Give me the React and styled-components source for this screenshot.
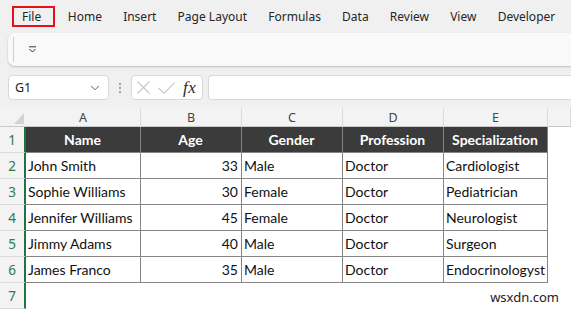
import React from "react";
import styled, { createGlobalStyle } from "styled-components";
import { ChevronDown, EllipsisVertical } from "lucide-react";

const Global = createGlobalStyle`
  html, body { margin: 0; padding: 0; }
  body {
    background: #f0f0f0;
    width: 571px;
    height: 309px;
    overflow: hidden;
    font-family: "Noto Sans", "Liberation Sans", sans-serif;
  }
`;

const Page = styled.div`
  display: flex;
  flex-direction: column;
  width: 571px;
  height: 309px;
  overflow: hidden;
`;

const TabBar = styled.div`
  display: flex;
  align-items: center;
  height: 33px;
  padding-left: 12px;
  box-sizing: border-box;
`;

const Tab = styled.div`
  font-size: 12px;
  color: #262626;
  white-space: nowrap;
  line-height: 17px;
  padding: ${(p) => (p.$active ? "0 12px 0 8px" : "0 10.6px")};
  border: ${(p) => (p.$active ? "2px solid #e8101a" : "none")};
  height: ${(p) => (p.$active ? "17px" : "auto")};
  margin-right: ${(p) => (p.$active ? "2px" : "0")};
  display: flex;
  align-items: center;
`;

const Ribbon = styled.div`
  margin-left: 8px;
  width: 580px;
  height: 34px;
  background: #f9f9f9;
  border-radius: 7px 0 0 7px;
  box-shadow: 0 1px 2px rgba(0, 0, 0, 0.22);
  display: flex;
  align-items: center;
  padding-left: 5px;
  gap: 14px;
  box-sizing: border-box;
`;

const Divider = styled.div`
  width: 1px;
  height: 25px;
  background: #cfcfcf;
`;

const FormulaRow = styled.div`
  display: flex;
  align-items: center;
  height: 25px;
  margin-top: 9px;
  padding-left: 8px;
`;

const Box = styled.div`
  height: 25px;
  box-sizing: border-box;
  background: #ffffff;
  border: 1px solid #d9d9d9;
  border-radius: 4px;
  display: flex;
  align-items: center;
`;

const NameBox = styled(Box)`
  width: 101px;
  padding: 0 6px 0 6px;
  justify-content: space-between;
  font-size: 12.5px;
  color: #222;
`;

const Dots = styled.div`
  width: 22px;
  display: flex;
  justify-content: center;
  color: #a0a0a0;
`;

const FxBox = styled(Box)`
  width: 72px;
  padding: 0 3px 0 5px;
  gap: 8px;
`;

const Fx = styled.span`
  font-family: "Liberation Serif", serif;
  font-style: italic;
  font-size: 17px;
  color: #2a2a2a;
  margin-left: 0px;
  letter-spacing: 0.5px;
`;

const Input = styled(Box)`
  margin-left: 5px;
  flex: 1;
  border-radius: 4px 0 0 4px;
  border-right: none;
`;

const Grid = styled.div`
  margin-top: 8px;
  display: grid;
  grid-template-columns: 26px 115px 101px 101px 101px 104px 1fr;
  grid-template-rows: 19px repeat(7, 26px);
  background: #ffffff;
  flex: 1;
`;

const Corner = styled.div`
  background: #f3f3f3;
  border-bottom: 1px solid #c9c9c9;
  position: relative;
  overflow: hidden;
`;

const ColHead = styled.div`
  background: #f3f3f3;
  border-bottom: 1px solid #c9c9c9;
  border-right: 1px solid #dadada;
  display: flex;
  align-items: center;
  justify-content: center;
  font-size: 12.5px;
  color: #444;
  padding-top: 1px;
  box-sizing: border-box;
`;

const RowHead = styled.div`
  background: #f3f3f3;
  border-right: 2px solid #217346;
  border-bottom: 1px solid #dcdcdc;
  box-sizing: border-box;
  display: flex;
  align-items: flex-end;
  justify-content: center;
  padding-bottom: 3px;
  font-size: 13.5px;
  color: #2f7a4e;
`;

const Cell = styled.div`
  box-sizing: border-box;
  font-family: Lato, "Liberation Sans", sans-serif;
  font-size: 14px;
  white-space: nowrap;
  overflow: visible;
  display: flex;
  align-items: flex-end;
  padding: 0 3px 4px 2px;
  color: ${(p) => (p.$head ? "#ffffff" : "#111")};
  font-weight: ${(p) => (p.$head ? 700 : 400)};
  background: ${(p) => (p.$head ? "#3b3b3b" : "#ffffff")};
  justify-content: ${(p) =>
    p.$head ? "center" : p.$num ? "flex-end" : "flex-start"};
  border-right: ${(p) => (p.$blank ? "none" : "1px solid #858585")};
  border-bottom: ${(p) => (p.$blank ? "none" : "1px solid #858585")};
`;

const Watermark = styled.div`
  position: absolute;
  right: 12px;
  bottom: 3px;
  font-family: "Noto Sans", sans-serif;
  font-size: 13px;
  color: #222;
`;

const Wrap = styled.div`
  position: relative;
  width: 571px;
  height: 309px;
`;

const tabs = ["File", "Home", "Insert", "Page Layout", "Formulas", "Data", "Review", "View", "Developer"];
const cols = ["A", "B", "C", "D", "E", ""];
const head = ["Name", "Age", "Gender", "Profession", "Specialization"];
const rows = [
  ["John Smith", "33", "Male", "Doctor", "Cardiologist"],
  ["Sophie Williams", "30", "Female", "Doctor", "Pediatrician"],
  ["Jennifer Williams", "45", "Female", "Doctor", "Neurologist"],
  ["Jimmy Adams", "40", "Male", "Doctor", "Surgeon"],
  ["James Franco", "35", "Male", "Doctor", "Endocrinologyst"],
];

export default function App() {
  return (
    <Wrap>
      <Global />
      <Page>
        <TabBar>
          {tabs.map((t, i) => (
            <Tab key={t} $active={i === 0}>{t}</Tab>
          ))}
        </TabBar>
        <Ribbon>
          <Divider />
          <svg width="9" height="7" viewBox="0 0 9 7">
            <path d="M1 0.8 H8" stroke="#333" strokeWidth="1" />
            <path d="M1.5 3 L4.5 6 L7.5 3" stroke="#333" strokeWidth="1" fill="none" />
          </svg>
        </Ribbon>
        <FormulaRow>
          <NameBox>
            <span>G1</span>
            <ChevronDown size={14} strokeWidth={1.6} color="#555" />
          </NameBox>
          <Dots>
            <EllipsisVertical size={14} strokeWidth={2} />
          </Dots>
          <FxBox>
            <svg width="13" height="13" viewBox="0 0 13 13">
              <path d="M0.5 0.5 L12.5 12.5 M12.5 0.5 L0.5 12.5" stroke="#c6c6c6" strokeWidth="1.1" fill="none" />
            </svg>
            <svg width="17" height="12" viewBox="0 0 17 12">
              <path d="M0.5 6 L6 11.3 L16.5 0.6" stroke="#c6c6c6" strokeWidth="1.1" fill="none" />
            </svg>
            <Fx>fx</Fx>
          </FxBox>
          <Input />
        </FormulaRow>
        <Grid>
          <Corner>
            <svg width="26" height="19" style={{ position: "absolute", left: 0, top: 0 }}>
              <path d="M14 16 L24 16 L24 5 Z" fill="#d4d4d4" />
            </svg>
          </Corner>
          {cols.map((c, i) => (
            <ColHead key={i}>{c}</ColHead>
          ))}
          <RowHead>1</RowHead>
          {head.map((h) => (
            <Cell key={h} $head>{h}</Cell>
          ))}
          <Cell $blank />
          {rows.map((r, ri) => (
            <React.Fragment key={ri}>
              <RowHead>{ri + 2}</RowHead>
              {r.map((v, ci) => (
                <Cell key={ci} $num={ci === 1}>{v}</Cell>
              ))}
              <Cell $blank />
            </React.Fragment>
          ))}
          <RowHead>7</RowHead>
          {cols.map((c, i) => (
            <Cell key={i} $blank />
          ))}
        </Grid>
      </Page>
      <Watermark>wsxdn.com</Watermark>
    </Wrap>
  );
}
